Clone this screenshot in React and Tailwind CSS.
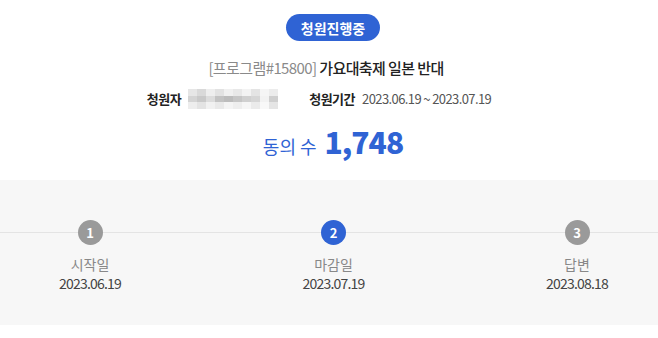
import React from "react";

const blurCells = [
  ["#e6e6e6","#d9d9d9","#eeeeee","#e2e2e2","#f0f0f0","#e8e8e8","#f3f3f3","#e4e4e4","#f5f5f5","#ececec"],
  ["#d4d4d4","#c9c9c9","#dcdcdc","#c3c3c3","#bcbcbc","#c6c6c6","#d0d0d0","#d6d6d6","#f2f2f2","#cfcfcf"],
  ["#ededed","#e3e3e3","#f1f1f1","#e9e9e9","#f4f4f4","#eeeeee","#f6f6f6","#ebebeb","#f8f8f8","#e5e5e5"],
];

function Step({ n, label, date, active }) {
  return (
    <div className="flex flex-col items-center w-[120px]">
      <div
        className={
          "relative z-10 w-[25px] h-[25px] rounded-full flex items-center justify-center text-white text-[13px] font-semibold leading-none " +
          (active ? "bg-[#2f63d4]" : "bg-[#9a9a9a]")
        }
      >
        {n}
      </div>
      <div className="mt-[9px] text-[14px] leading-[20px] text-[#888888]">{label}</div>
      <div className="mt-[0px] text-[14px] leading-[18px] text-[#444444] tracking-[-0.8px]">{date}</div>
    </div>
  );
}

export default function App() {
  return (
    <div
      className="w-[658px] h-[338px] bg-white overflow-hidden"
      style={{ fontFamily: "'Noto Sans CJK KR', 'Noto Sans', sans-serif" }}
    >
      <div className="flex flex-col items-center pt-[14px] pl-[8px]">
        <div className="h-[27px] px-[15px] rounded-full bg-[#2f63d4] text-white text-[14px] font-semibold flex items-center leading-none">
          청원진행중
        </div>
        <div className="mt-[16px] text-[15px] leading-[22px] tracking-[-0.6px] -ml-[14px]">
          <span className="text-[#8a8a8a]">[프로그램#15800]</span>{" "}
          <span className="text-[#222222] font-medium">가요대축제 일본 반대</span>
        </div>
        <div className="mt-[10px] flex items-center text-[13px] leading-[20px] -ml-[28px]">
          <span className="font-semibold text-[#222222] tracking-[-0.5px]">청원자</span>
          <div className="ml-[7px] grid grid-cols-10 w-[90px] h-[20px]">
            {blurCells.flat().map((c, i) => (
              <div key={i} style={{ backgroundColor: c }} />
            ))}
          </div>
          <span className="ml-[31px] font-semibold text-[#222222] tracking-[-0.5px]">청원기간</span>
          <span className="ml-[7px] text-[13px] text-[#555555] tracking-[-0.6px]">2023.06.19 ~ 2023.07.19</span>
        </div>
        <div className="mt-[12px] flex items-baseline text-[#2f63d4]">
          <span className="text-[18px] mr-[8px]">동의 수</span>
          <span className="text-[30px] font-extrabold tracking-[-1px] leading-[40px]">1,748</span>
        </div>
      </div>
      <div className="mt-[19px] h-[145px] bg-[#f7f7f7] relative">
        <div className="absolute left-0 right-0 top-[52px] h-px bg-[#e4e4e4]" />
        <div className="flex justify-between pt-[40px] pl-[30px] pr-[21px] relative">
          <Step n="1" label="시작일" date="2023.06.19" />
          <Step n="2" label="마감일" date="2023.07.19" active />
          <Step n="3" label="답변" date="2023.08.18" />
        </div>
      </div>
    </div>
  );
}
